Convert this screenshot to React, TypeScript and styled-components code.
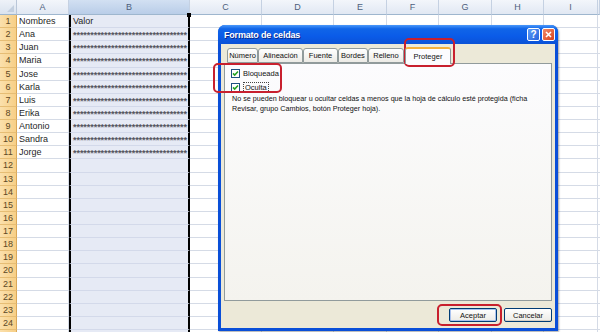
import styled, { createGlobalStyle } from 'styled-components';

const GlobalStyle = createGlobalStyle`
  html, body { margin: 0; padding: 0; background: #fff; }
  body { font-family: 'Liberation Sans', Arial, sans-serif; }
`;

const COLS = '17px 52px 121px 72px 72px 53px 52px 53px 52px 54px 2px';
const LETTERS = ['A', 'B', 'C', 'D', 'E', 'F', 'G', 'H', 'I', ''];
const NAMES = ['Nombres', 'Ana', 'Juan', 'Maria', 'Jose', 'Karla', 'Luis', 'Erika', 'Antonio', 'Sandra', 'Jorge'];
const STARS = '*'.repeat(33);

const Page = styled.div`
  position: relative;
  width: 600px;
  height: 332px;
  overflow: hidden;
  background: #fff;
`;

const Sheet = styled.div`
  display: flex;
  flex-direction: column;
`;

const HeaderRow = styled.div`
  display: grid;
  grid-template-columns: ${COLS};
  height: 15px;
`;

const Corner = styled.div`
  background: linear-gradient(#eef2f8, #dae3ef);
  border-right: 1px solid #b9c6d8;
  border-bottom: 1px solid #9eb6ce;
  position: relative;
  &::after {
    content: '';
    position: absolute;
    right: 2px;
    bottom: 2px;
    border-left: 7px solid transparent;
    border-bottom: 7px solid #c3cfdf;
  }
`;

const ColHead = styled.div<{ $selected?: boolean }>`
  display: flex;
  align-items: center;
  justify-content: center;
  font-size: 9px;
  color: #4d5f7c;
  background: ${(p) => (p.$selected ? 'linear-gradient(#d2e0f2, #b9cde8)' : 'linear-gradient(#f3f6fb, #e1e8f3)')};
  border-right: 1px solid #c5d1e2;
  border-bottom: 1px solid #9eb6ce;
`;

const Row = styled.div`
  display: grid;
  grid-template-columns: ${COLS};
  height: 13.125px;
`;

const RowNum = styled.div`
  display: flex;
  align-items: center;
  justify-content: center;
  font-size: 9px;
  color: #5c4826;
  background: linear-gradient(90deg, #fbe0ac, #f7cf86);
  border-right: 1px solid #d9a859;
  border-bottom: 1px solid #e6bd74;
`;

const Cell = styled.div<{ $selected?: boolean }>`
  display: flex;
  align-items: center;
  padding-left: 2px;
  overflow: hidden;
  white-space: nowrap;
  font-size: 9px;
  color: #1f1f1f;
  background: ${(p) => (p.$selected ? '#e6eaf5' : '#fff')};
  border-bottom: 1px solid ${(p) => (p.$selected ? '#d3d9ea' : '#d5dbe6')};
  border-right: ${(p) => (p.$selected ? '2px solid #000' : '1px solid #d5dbe6')};
  border-left: ${(p) => (p.$selected ? '2px solid #000' : 'none')};
`;

const Stars = styled.span`
  font-size: 9px;
  letter-spacing: -0.05px;
  font-weight: bold;
  color: #55555f;
  line-height: 1;
  padding-top: 3px;
`;

const FillHandle = styled.div`
  position: absolute;
  left: 187px;
  top: 13px;
  width: 4px;
  height: 4px;
  background: #000;
`;

/* dialog */

const Dialog = styled.div`
  position: absolute;
  left: 218px;
  top: 25px;
  width: 340px;
  height: 306px;
  display: flex;
  flex-direction: column;
  background: #0a4fd8;
  border-radius: 7px 7px 0 0;
  box-shadow: 1px 1px 2px rgba(0, 0, 0, 0.35);
`;

const TitleBar = styled.div`
  height: 19px;
  display: flex;
  align-items: center;
  padding: 0 3px 0 6px;
  border-radius: 7px 7px 0 0;
  background: linear-gradient(#4a98fa 0%, #1065e8 20%, #0a5be8 60%, #0b52d6 100%);
`;

const Title = styled.span`
  flex: 1;
  color: #fff;
  font-weight: bold;
  font-size: 9px;
  letter-spacing: -0.2px;
  text-shadow: 1px 1px 0 #0a2a8a;
`;

const TitleButtons = styled.div`
  display: flex;
  gap: 2px;
`;

const TitleButton = styled.div<{ $close?: boolean }>`
  width: 13px;
  height: 13px;
  box-sizing: border-box;
  border: 1px solid #fff;
  border-radius: 2px;
  display: flex;
  align-items: center;
  justify-content: center;
  color: #fff;
  font-weight: bold;
  font-size: 10px;
  background: ${(p) => (p.$close ? 'linear-gradient(135deg, #f08a68, #d9421c)' : 'linear-gradient(135deg, #5d9cf7, #2763dd)')};
`;

const Body = styled.div`
  flex: 1;
  margin: 0 3px 3px 3px;
  background: #ece9d8;
  display: flex;
  flex-direction: column;
  padding: 4px 3px 0 3px;
`;

const TabStrip = styled.div`
  height: 15px;
  display: flex;
  align-items: flex-end;
  padding-left: 3px;
  position: relative;
  z-index: 1;
`;

const Tab = styled.div<{ $w: number; $active?: boolean }>`
  width: ${(p) => p.$w}px;
  height: ${(p) => (p.$active ? 17 : 15)}px;
  box-sizing: border-box;
  display: flex;
  align-items: center;
  justify-content: center;
  font-size: 7.5px;
  color: #111;
  border: 1px solid #919b9c;
  border-bottom: ${(p) => (p.$active ? 'none' : '1px solid #919b9c')};
  border-radius: 3px 3px 0 0;
  margin-bottom: ${(p) => (p.$active ? -1 : 0)}px;
  margin-left: ${(p) => (p.$active ? 1 : 0)}px;
  background: ${(p) => (p.$active ? '#fcfcfe' : 'linear-gradient(#ffffff, #ecebe6)')};
  border-top: ${(p) => (p.$active ? '2px solid #f4b03c' : '1px solid #919b9c')};
`;

const Panel = styled.div`
  flex: 1;
  border: 1px solid #919b9c;
  background: linear-gradient(#fcfcfe, #f4f3ee);
  padding: 2px 6px;
  display: flex;
  flex-direction: column;
`;

const CheckRow = styled.div`
  display: flex;
  align-items: center;
  gap: 3px;
  height: 14px;
  font-size: 7.5px;
  color: #111;
`;

const FocusLabel = styled.span`
  border: 1px dotted #444;
  padding: 0 1px;
  line-height: 9px;
`;

const Note = styled.p`
  margin: 0 0 0 1px;
  font-size: 7.2px;
  line-height: 10px;
  color: #111;
`;

const ButtonRow = styled.div`
  height: 26px;
  display: flex;
  align-items: center;
  justify-content: flex-end;
  gap: 7px;
  padding-top: 1px;
`;

const Button = styled.div<{ $default?: boolean }>`
  width: 48px;
  height: 14px;
  box-sizing: border-box;
  display: flex;
  align-items: center;
  justify-content: center;
  font-size: 7.5px;
  color: #111;
  border: 1px solid #003c74;
  border-radius: 2px;
  background: linear-gradient(#ffffff, #ecebe6);
  box-shadow: ${(p) => (p.$default ? 'inset 0 0 0 1px #a9c2ef' : 'inset 0 -1px 0 #d6d0c5')};
`;

const Highlight = styled.div<{ $x: number; $y: number; $w: number; $h: number }>`
  position: absolute;
  left: ${(p) => p.$x}px;
  top: ${(p) => p.$y}px;
  width: ${(p) => p.$w}px;
  height: ${(p) => p.$h}px;
  box-sizing: border-box;
  border: 2px solid #c8202e;
  border-radius: 5px;
`;

const CheckBox = () => (
  <svg width='9' height='9' viewBox='0 0 9 9'>
    <rect x='0.5' y='0.5' width='8' height='8' fill='#fff' stroke='#1c5180' />
    <path d='M2 4.4 L3.7 6.1 L7 2.6' stroke='#21a121' strokeWidth='1.5' fill='none' />
  </svg>
);

const TABS = [
  { label: 'Número', w: 31 },
  { label: 'Alineación', w: 45 },
  { label: 'Fuente', w: 35 },
  { label: 'Bordes', w: 30 },
  { label: 'Relleno', w: 36 },
  { label: 'Proteger', w: 46, active: true },
];

const App = () => (
  <Page>
    <GlobalStyle />
    <Sheet>
      <HeaderRow>
        <Corner />
        {LETTERS.map((l) => (
          <ColHead key={l} $selected={l === 'B'}>{l}</ColHead>
        ))}
      </HeaderRow>
      {Array.from({ length: 25 }, (_, i) => (
        <Row key={i}>
          <RowNum>{i < 24 ? i + 1 : null}</RowNum>
          {LETTERS.map((l) => (
            <Cell key={l} $selected={l === 'B'}>
              {l === 'A' ? NAMES[i] : null}
              {l === 'B' && i === 0 ? 'Valor' : null}
              {l === 'B' && i > 0 && i < 11 ? <Stars>{STARS}</Stars> : null}
            </Cell>
          ))}
        </Row>
      ))}
    </Sheet>
    <FillHandle />

    <Dialog>
      <TitleBar>
        <Title>Formato de celdas</Title>
        <TitleButtons>
          <TitleButton>?</TitleButton>
          <TitleButton $close>
            <svg width='7' height='7' viewBox='0 0 7 7'>
              <path d='M1 1 L6 6 M6 1 L1 6' stroke='#fff' strokeWidth='1.6' />
            </svg>
          </TitleButton>
        </TitleButtons>
      </TitleBar>
      <Body>
        <TabStrip>
          {TABS.map((t) => (
            <Tab key={t.label} $w={t.w} $active={t.active}>{t.label}</Tab>
          ))}
        </TabStrip>
        <Panel>
          <CheckRow>
            <CheckBox />
            <span>Bloqueada</span>
          </CheckRow>
          <CheckRow>
            <CheckBox />
            <FocusLabel>Oculta</FocusLabel>
          </CheckRow>
          <Note>
            No se pueden bloquear u ocultar celdas a menos que la hoja de cálculo esté protegida (ficha
            <br />
            Revisar, grupo Cambios, botón Proteger hoja).
          </Note>
        </Panel>
        <ButtonRow>
          <Button $default>Aceptar</Button>
          <Button>Cancelar</Button>
        </ButtonRow>
      </Body>
    </Dialog>

    <Highlight $x={213} $y={63} $w={69} $h={30} />
    <Highlight $x={404} $y={38} $w={51} $h={29} />
    <Highlight $x={437} $y={304} $w={65} $h={22} />
  </Page>
);

export default App;
